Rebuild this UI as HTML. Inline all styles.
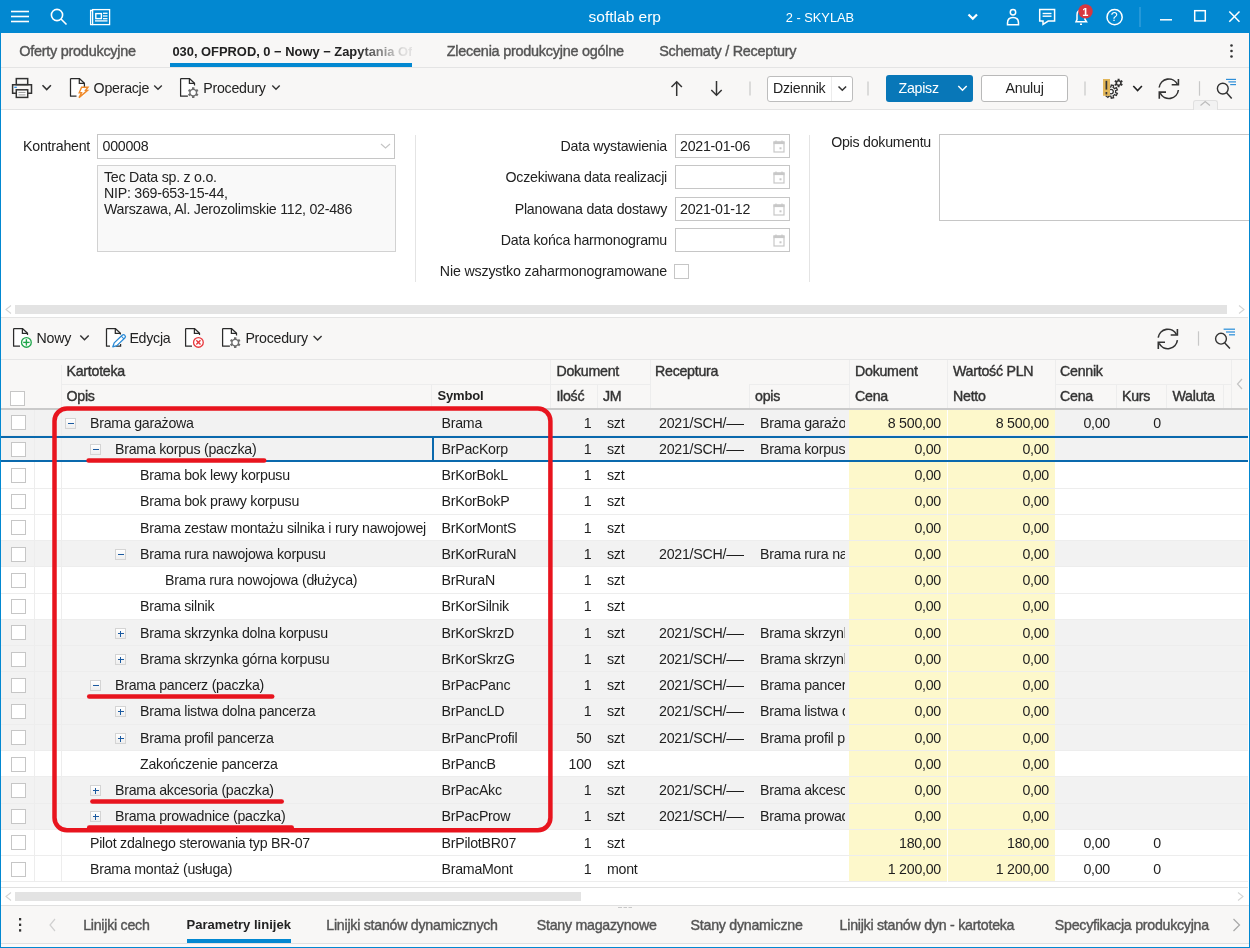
<!DOCTYPE html>
<html><head><meta charset="utf-8">
<style>
*{margin:0;padding:0;box-sizing:border-box}
html,body{width:1250px;height:948px;overflow:hidden;background:#fff;font-family:"Liberation Sans",sans-serif;color:#222;position:relative}
.a{position:absolute}
.t{position:absolute;white-space:nowrap;line-height:16px;letter-spacing:-0.25px}
.m{-webkit-text-stroke:0.4px currentColor}
svg{position:absolute;overflow:visible}
</style></head><body><div style="position:absolute;left:0;top:0;width:1250px;height:948px;overflow:hidden;will-change:transform;background:#fff">

<div class="a" style="left:0px;top:0px;width:1250px;height:33px;background:#0288d1;"></div>
<div class="a" style="left:0;top:33px;width:1px;height:915px;background:#0288d1;z-index:50"></div>
<div class="a" style="left:1249px;top:33px;width:1px;height:915px;background:#0288d1;z-index:50"></div>
<div class="a" style="left:0;top:947px;width:1250px;height:1px;background:#0288d1;z-index:50"></div>
<div class="a" style="left:1px;top:33px;width:1248px;height:34px;background:#f8f7f6;"></div>
<div class="a" style="left:1px;top:67px;width:1248px;height:1px;background:#e4e4e4;"></div>
<div class="a" style="left:1px;top:68px;width:1248px;height:41px;background:#f8f7f6;"></div>
<div class="a" style="left:1px;top:109px;width:1248px;height:1px;background:#e4e4e4;"></div>
<div class="a" style="left:1px;top:317px;width:1247px;height:1px;background:#e4e4e4;"></div>
<div class="a" style="left:1px;top:318px;width:1247px;height:41px;background:#f8f7f6;"></div>
<div class="a" style="left:1px;top:359px;width:1247px;height:1px;background:#e6e6e6;"></div>
<div class="a" style="left:1px;top:360px;width:1247px;height:48px;background:#f8f7f6;"></div>
<div class="a" style="left:1px;top:408px;width:1247px;height:2px;background:#cacaca;"></div>
<div class="a" style="left:1px;top:409.75px;width:1247px;height:26.25px;background:#f2f2f2"></div>
<div class="a" style="left:849px;top:409.75px;width:206px;height:26.25px;background:#fdf8cb"></div>
<div class="a" style="left:1px;top:435.00px;width:1247px;height:1px;background:#ededed"></div>
<div class="a" style="left:11px;top:415.25px;width:15px;height:15px;background:#fff;border:1px solid #c6c6c6"></div>
<div class="a" style="left:65px;top:418px;width:11px;height:11px;border:1px solid #d4d4d4;background:linear-gradient(#fff,#eee)"><div class="a" style="left:1.8px;top:4px;width:6px;height:1px;background:#1b5aa0"></div></div>
<div class="t" style="left:90.00px;top:414.53px;font-size:14.2px;color:#1e1e1e;">Brama garażowa</div>
<div class="t" style="left:441.50px;top:414.53px;font-size:14.2px;color:#1e1e1e;">Brama</div>
<div class="t" style="left:191.50px;width:400px;text-align:right;top:414.53px;font-size:14.2px;color:#1e1e1e;">1</div>
<div class="t" style="left:607.00px;top:414.53px;font-size:14.2px;color:#1e1e1e;">szt</div>
<div class="t" style="left:659.00px;top:414.53px;font-size:14.2px;color:#1e1e1e;width:84.5px;overflow:hidden;">2021/SCH/———</div>
<div class="t" style="left:760.00px;top:414.53px;font-size:14.2px;color:#1e1e1e;width:85px;overflow:hidden;">Brama garażo</div>
<div class="t" style="left:541.00px;width:400px;text-align:right;top:414.53px;font-size:14.2px;color:#1e1e1e;">8 500,00</div>
<div class="t" style="left:649.00px;width:400px;text-align:right;top:414.53px;font-size:14.2px;color:#1e1e1e;">8 500,00</div>
<div class="t" style="left:710.00px;width:400px;text-align:right;top:414.53px;font-size:14.2px;color:#1e1e1e;">0,00</div>
<div class="t" style="left:761.00px;width:400px;text-align:right;top:414.53px;font-size:14.2px;color:#1e1e1e;">0</div>
<div class="a" style="left:1px;top:436.00px;width:1247px;height:26.25px;background:#f2f2f2"></div>
<div class="a" style="left:849px;top:436.00px;width:206px;height:26.25px;background:#fdf8cb"></div>
<div class="a" style="left:1px;top:461.25px;width:1247px;height:1px;background:#ededed"></div>
<div class="a" style="left:11px;top:441.50px;width:15px;height:15px;background:#fff;border:1px solid #c6c6c6"></div>
<div class="a" style="left:90px;top:444px;width:11px;height:11px;border:1px solid #d4d4d4;background:linear-gradient(#fff,#eee)"><div class="a" style="left:1.8px;top:4px;width:6px;height:1px;background:#1b5aa0"></div></div>
<div class="t" style="left:115.00px;top:440.78px;font-size:14.2px;color:#1e1e1e;">Brama korpus (paczka)</div>
<div class="t" style="left:441.50px;top:440.78px;font-size:14.2px;color:#1e1e1e;">BrPacKorp</div>
<div class="t" style="left:191.50px;width:400px;text-align:right;top:440.78px;font-size:14.2px;color:#1e1e1e;">1</div>
<div class="t" style="left:607.00px;top:440.78px;font-size:14.2px;color:#1e1e1e;">szt</div>
<div class="t" style="left:659.00px;top:440.78px;font-size:14.2px;color:#1e1e1e;width:84.5px;overflow:hidden;">2021/SCH/———</div>
<div class="t" style="left:760.00px;top:440.78px;font-size:14.2px;color:#1e1e1e;width:85px;overflow:hidden;">Brama korpus</div>
<div class="t" style="left:541.00px;width:400px;text-align:right;top:440.78px;font-size:14.2px;color:#1e1e1e;">0,00</div>
<div class="t" style="left:649.00px;width:400px;text-align:right;top:440.78px;font-size:14.2px;color:#1e1e1e;">0,00</div>
<div class="a" style="left:1px;top:462.25px;width:1247px;height:26.25px;background:#ffffff"></div>
<div class="a" style="left:849px;top:462.25px;width:206px;height:26.25px;background:#fdf8cb"></div>
<div class="a" style="left:1px;top:487.50px;width:1247px;height:1px;background:#ededed"></div>
<div class="a" style="left:11px;top:467.75px;width:15px;height:15px;background:#fff;border:1px solid #c6c6c6"></div>
<div class="t" style="left:140.00px;top:467.03px;font-size:14.2px;color:#1e1e1e;">Brama bok lewy korpusu</div>
<div class="t" style="left:441.50px;top:467.03px;font-size:14.2px;color:#1e1e1e;">BrKorBokL</div>
<div class="t" style="left:191.50px;width:400px;text-align:right;top:467.03px;font-size:14.2px;color:#1e1e1e;">1</div>
<div class="t" style="left:607.00px;top:467.03px;font-size:14.2px;color:#1e1e1e;">szt</div>
<div class="t" style="left:541.00px;width:400px;text-align:right;top:467.03px;font-size:14.2px;color:#1e1e1e;">0,00</div>
<div class="t" style="left:649.00px;width:400px;text-align:right;top:467.03px;font-size:14.2px;color:#1e1e1e;">0,00</div>
<div class="a" style="left:1px;top:488.50px;width:1247px;height:26.25px;background:#ffffff"></div>
<div class="a" style="left:849px;top:488.50px;width:206px;height:26.25px;background:#fdf8cb"></div>
<div class="a" style="left:1px;top:513.75px;width:1247px;height:1px;background:#ededed"></div>
<div class="a" style="left:11px;top:494.00px;width:15px;height:15px;background:#fff;border:1px solid #c6c6c6"></div>
<div class="t" style="left:140.00px;top:493.28px;font-size:14.2px;color:#1e1e1e;">Brama bok prawy korpusu</div>
<div class="t" style="left:441.50px;top:493.28px;font-size:14.2px;color:#1e1e1e;">BrKorBokP</div>
<div class="t" style="left:191.50px;width:400px;text-align:right;top:493.28px;font-size:14.2px;color:#1e1e1e;">1</div>
<div class="t" style="left:607.00px;top:493.28px;font-size:14.2px;color:#1e1e1e;">szt</div>
<div class="t" style="left:541.00px;width:400px;text-align:right;top:493.28px;font-size:14.2px;color:#1e1e1e;">0,00</div>
<div class="t" style="left:649.00px;width:400px;text-align:right;top:493.28px;font-size:14.2px;color:#1e1e1e;">0,00</div>
<div class="a" style="left:1px;top:514.75px;width:1247px;height:26.25px;background:#ffffff"></div>
<div class="a" style="left:849px;top:514.75px;width:206px;height:26.25px;background:#fdf8cb"></div>
<div class="a" style="left:1px;top:540.00px;width:1247px;height:1px;background:#ededed"></div>
<div class="a" style="left:11px;top:520.25px;width:15px;height:15px;background:#fff;border:1px solid #c6c6c6"></div>
<div class="t" style="left:140.00px;top:519.53px;font-size:14.2px;color:#1e1e1e;">Brama zestaw montażu silnika i rury nawojowej</div>
<div class="t" style="left:441.50px;top:519.53px;font-size:14.2px;color:#1e1e1e;">BrKorMontS</div>
<div class="t" style="left:191.50px;width:400px;text-align:right;top:519.53px;font-size:14.2px;color:#1e1e1e;">1</div>
<div class="t" style="left:607.00px;top:519.53px;font-size:14.2px;color:#1e1e1e;">szt</div>
<div class="t" style="left:541.00px;width:400px;text-align:right;top:519.53px;font-size:14.2px;color:#1e1e1e;">0,00</div>
<div class="t" style="left:649.00px;width:400px;text-align:right;top:519.53px;font-size:14.2px;color:#1e1e1e;">0,00</div>
<div class="a" style="left:1px;top:541.00px;width:1247px;height:26.25px;background:#f2f2f2"></div>
<div class="a" style="left:849px;top:541.00px;width:206px;height:26.25px;background:#fdf8cb"></div>
<div class="a" style="left:1px;top:566.25px;width:1247px;height:1px;background:#ededed"></div>
<div class="a" style="left:11px;top:546.50px;width:15px;height:15px;background:#fff;border:1px solid #c6c6c6"></div>
<div class="a" style="left:115px;top:549px;width:11px;height:11px;border:1px solid #d4d4d4;background:linear-gradient(#fff,#eee)"><div class="a" style="left:1.8px;top:4px;width:6px;height:1px;background:#1b5aa0"></div></div>
<div class="t" style="left:140.00px;top:545.78px;font-size:14.2px;color:#1e1e1e;">Brama rura nawojowa korpusu</div>
<div class="t" style="left:441.50px;top:545.78px;font-size:14.2px;color:#1e1e1e;">BrKorRuraN</div>
<div class="t" style="left:191.50px;width:400px;text-align:right;top:545.78px;font-size:14.2px;color:#1e1e1e;">1</div>
<div class="t" style="left:607.00px;top:545.78px;font-size:14.2px;color:#1e1e1e;">szt</div>
<div class="t" style="left:659.00px;top:545.78px;font-size:14.2px;color:#1e1e1e;width:84.5px;overflow:hidden;">2021/SCH/———</div>
<div class="t" style="left:760.00px;top:545.78px;font-size:14.2px;color:#1e1e1e;width:85px;overflow:hidden;">Brama rura na</div>
<div class="t" style="left:541.00px;width:400px;text-align:right;top:545.78px;font-size:14.2px;color:#1e1e1e;">0,00</div>
<div class="t" style="left:649.00px;width:400px;text-align:right;top:545.78px;font-size:14.2px;color:#1e1e1e;">0,00</div>
<div class="a" style="left:1px;top:567.25px;width:1247px;height:26.25px;background:#ffffff"></div>
<div class="a" style="left:849px;top:567.25px;width:206px;height:26.25px;background:#fdf8cb"></div>
<div class="a" style="left:1px;top:592.50px;width:1247px;height:1px;background:#ededed"></div>
<div class="a" style="left:11px;top:572.75px;width:15px;height:15px;background:#fff;border:1px solid #c6c6c6"></div>
<div class="t" style="left:165.00px;top:572.03px;font-size:14.2px;color:#1e1e1e;">Brama rura nowojowa (dłużyca)</div>
<div class="t" style="left:441.50px;top:572.03px;font-size:14.2px;color:#1e1e1e;">BrRuraN</div>
<div class="t" style="left:191.50px;width:400px;text-align:right;top:572.03px;font-size:14.2px;color:#1e1e1e;">1</div>
<div class="t" style="left:607.00px;top:572.03px;font-size:14.2px;color:#1e1e1e;">szt</div>
<div class="t" style="left:541.00px;width:400px;text-align:right;top:572.03px;font-size:14.2px;color:#1e1e1e;">0,00</div>
<div class="t" style="left:649.00px;width:400px;text-align:right;top:572.03px;font-size:14.2px;color:#1e1e1e;">0,00</div>
<div class="a" style="left:1px;top:593.50px;width:1247px;height:26.25px;background:#ffffff"></div>
<div class="a" style="left:849px;top:593.50px;width:206px;height:26.25px;background:#fdf8cb"></div>
<div class="a" style="left:1px;top:618.75px;width:1247px;height:1px;background:#ededed"></div>
<div class="a" style="left:11px;top:599.00px;width:15px;height:15px;background:#fff;border:1px solid #c6c6c6"></div>
<div class="t" style="left:140.00px;top:598.28px;font-size:14.2px;color:#1e1e1e;">Brama silnik</div>
<div class="t" style="left:441.50px;top:598.28px;font-size:14.2px;color:#1e1e1e;">BrKorSilnik</div>
<div class="t" style="left:191.50px;width:400px;text-align:right;top:598.28px;font-size:14.2px;color:#1e1e1e;">1</div>
<div class="t" style="left:607.00px;top:598.28px;font-size:14.2px;color:#1e1e1e;">szt</div>
<div class="t" style="left:541.00px;width:400px;text-align:right;top:598.28px;font-size:14.2px;color:#1e1e1e;">0,00</div>
<div class="t" style="left:649.00px;width:400px;text-align:right;top:598.28px;font-size:14.2px;color:#1e1e1e;">0,00</div>
<div class="a" style="left:1px;top:619.75px;width:1247px;height:26.25px;background:#f2f2f2"></div>
<div class="a" style="left:849px;top:619.75px;width:206px;height:26.25px;background:#fdf8cb"></div>
<div class="a" style="left:1px;top:645.00px;width:1247px;height:1px;background:#ededed"></div>
<div class="a" style="left:11px;top:625.25px;width:15px;height:15px;background:#fff;border:1px solid #c6c6c6"></div>
<div class="a" style="left:115px;top:628px;width:11px;height:11px;border:1px solid #d4d4d4;background:linear-gradient(#fff,#eee)"><div class="a" style="left:1.8px;top:4px;width:6px;height:1px;background:#1b5aa0"></div><div class="a" style="left:4.3px;top:1.5px;width:1px;height:6px;background:#1b5aa0"></div></div>
<div class="t" style="left:140.00px;top:624.53px;font-size:14.2px;color:#1e1e1e;">Brama skrzynka dolna korpusu</div>
<div class="t" style="left:441.50px;top:624.53px;font-size:14.2px;color:#1e1e1e;">BrKorSkrzD</div>
<div class="t" style="left:191.50px;width:400px;text-align:right;top:624.53px;font-size:14.2px;color:#1e1e1e;">1</div>
<div class="t" style="left:607.00px;top:624.53px;font-size:14.2px;color:#1e1e1e;">szt</div>
<div class="t" style="left:659.00px;top:624.53px;font-size:14.2px;color:#1e1e1e;width:84.5px;overflow:hidden;">2021/SCH/———</div>
<div class="t" style="left:760.00px;top:624.53px;font-size:14.2px;color:#1e1e1e;width:85px;overflow:hidden;">Brama skrzynka</div>
<div class="t" style="left:541.00px;width:400px;text-align:right;top:624.53px;font-size:14.2px;color:#1e1e1e;">0,00</div>
<div class="t" style="left:649.00px;width:400px;text-align:right;top:624.53px;font-size:14.2px;color:#1e1e1e;">0,00</div>
<div class="a" style="left:1px;top:646.00px;width:1247px;height:26.25px;background:#f2f2f2"></div>
<div class="a" style="left:849px;top:646.00px;width:206px;height:26.25px;background:#fdf8cb"></div>
<div class="a" style="left:1px;top:671.25px;width:1247px;height:1px;background:#ededed"></div>
<div class="a" style="left:11px;top:651.50px;width:15px;height:15px;background:#fff;border:1px solid #c6c6c6"></div>
<div class="a" style="left:115px;top:654px;width:11px;height:11px;border:1px solid #d4d4d4;background:linear-gradient(#fff,#eee)"><div class="a" style="left:1.8px;top:4px;width:6px;height:1px;background:#1b5aa0"></div><div class="a" style="left:4.3px;top:1.5px;width:1px;height:6px;background:#1b5aa0"></div></div>
<div class="t" style="left:140.00px;top:650.78px;font-size:14.2px;color:#1e1e1e;">Brama skrzynka górna korpusu</div>
<div class="t" style="left:441.50px;top:650.78px;font-size:14.2px;color:#1e1e1e;">BrKorSkrzG</div>
<div class="t" style="left:191.50px;width:400px;text-align:right;top:650.78px;font-size:14.2px;color:#1e1e1e;">1</div>
<div class="t" style="left:607.00px;top:650.78px;font-size:14.2px;color:#1e1e1e;">szt</div>
<div class="t" style="left:659.00px;top:650.78px;font-size:14.2px;color:#1e1e1e;width:84.5px;overflow:hidden;">2021/SCH/———</div>
<div class="t" style="left:760.00px;top:650.78px;font-size:14.2px;color:#1e1e1e;width:85px;overflow:hidden;">Brama skrzynka</div>
<div class="t" style="left:541.00px;width:400px;text-align:right;top:650.78px;font-size:14.2px;color:#1e1e1e;">0,00</div>
<div class="t" style="left:649.00px;width:400px;text-align:right;top:650.78px;font-size:14.2px;color:#1e1e1e;">0,00</div>
<div class="a" style="left:1px;top:672.25px;width:1247px;height:26.25px;background:#f2f2f2"></div>
<div class="a" style="left:849px;top:672.25px;width:206px;height:26.25px;background:#fdf8cb"></div>
<div class="a" style="left:1px;top:697.50px;width:1247px;height:1px;background:#ededed"></div>
<div class="a" style="left:11px;top:677.75px;width:15px;height:15px;background:#fff;border:1px solid #c6c6c6"></div>
<div class="a" style="left:90px;top:680px;width:11px;height:11px;border:1px solid #d4d4d4;background:linear-gradient(#fff,#eee)"><div class="a" style="left:1.8px;top:4px;width:6px;height:1px;background:#1b5aa0"></div></div>
<div class="t" style="left:115.00px;top:677.03px;font-size:14.2px;color:#1e1e1e;">Brama pancerz (paczka)</div>
<div class="t" style="left:441.50px;top:677.03px;font-size:14.2px;color:#1e1e1e;">BrPacPanc</div>
<div class="t" style="left:191.50px;width:400px;text-align:right;top:677.03px;font-size:14.2px;color:#1e1e1e;">1</div>
<div class="t" style="left:607.00px;top:677.03px;font-size:14.2px;color:#1e1e1e;">szt</div>
<div class="t" style="left:659.00px;top:677.03px;font-size:14.2px;color:#1e1e1e;width:84.5px;overflow:hidden;">2021/SCH/———</div>
<div class="t" style="left:760.00px;top:677.03px;font-size:14.2px;color:#1e1e1e;width:85px;overflow:hidden;">Brama pancerz</div>
<div class="t" style="left:541.00px;width:400px;text-align:right;top:677.03px;font-size:14.2px;color:#1e1e1e;">0,00</div>
<div class="t" style="left:649.00px;width:400px;text-align:right;top:677.03px;font-size:14.2px;color:#1e1e1e;">0,00</div>
<div class="a" style="left:1px;top:698.50px;width:1247px;height:26.25px;background:#f2f2f2"></div>
<div class="a" style="left:849px;top:698.50px;width:206px;height:26.25px;background:#fdf8cb"></div>
<div class="a" style="left:1px;top:723.75px;width:1247px;height:1px;background:#ededed"></div>
<div class="a" style="left:11px;top:704.00px;width:15px;height:15px;background:#fff;border:1px solid #c6c6c6"></div>
<div class="a" style="left:115px;top:706px;width:11px;height:11px;border:1px solid #d4d4d4;background:linear-gradient(#fff,#eee)"><div class="a" style="left:1.8px;top:4px;width:6px;height:1px;background:#1b5aa0"></div><div class="a" style="left:4.3px;top:1.5px;width:1px;height:6px;background:#1b5aa0"></div></div>
<div class="t" style="left:140.00px;top:703.28px;font-size:14.2px;color:#1e1e1e;">Brama listwa dolna pancerza</div>
<div class="t" style="left:441.50px;top:703.28px;font-size:14.2px;color:#1e1e1e;">BrPancLD</div>
<div class="t" style="left:191.50px;width:400px;text-align:right;top:703.28px;font-size:14.2px;color:#1e1e1e;">1</div>
<div class="t" style="left:607.00px;top:703.28px;font-size:14.2px;color:#1e1e1e;">szt</div>
<div class="t" style="left:659.00px;top:703.28px;font-size:14.2px;color:#1e1e1e;width:84.5px;overflow:hidden;">2021/SCH/———</div>
<div class="t" style="left:760.00px;top:703.28px;font-size:14.2px;color:#1e1e1e;width:85px;overflow:hidden;">Brama listwa d</div>
<div class="t" style="left:541.00px;width:400px;text-align:right;top:703.28px;font-size:14.2px;color:#1e1e1e;">0,00</div>
<div class="t" style="left:649.00px;width:400px;text-align:right;top:703.28px;font-size:14.2px;color:#1e1e1e;">0,00</div>
<div class="a" style="left:1px;top:724.75px;width:1247px;height:26.25px;background:#f2f2f2"></div>
<div class="a" style="left:849px;top:724.75px;width:206px;height:26.25px;background:#fdf8cb"></div>
<div class="a" style="left:1px;top:750.00px;width:1247px;height:1px;background:#ededed"></div>
<div class="a" style="left:11px;top:730.25px;width:15px;height:15px;background:#fff;border:1px solid #c6c6c6"></div>
<div class="a" style="left:115px;top:733px;width:11px;height:11px;border:1px solid #d4d4d4;background:linear-gradient(#fff,#eee)"><div class="a" style="left:1.8px;top:4px;width:6px;height:1px;background:#1b5aa0"></div><div class="a" style="left:4.3px;top:1.5px;width:1px;height:6px;background:#1b5aa0"></div></div>
<div class="t" style="left:140.00px;top:729.53px;font-size:14.2px;color:#1e1e1e;">Brama profil pancerza</div>
<div class="t" style="left:441.50px;top:729.53px;font-size:14.2px;color:#1e1e1e;">BrPancProfil</div>
<div class="t" style="left:191.50px;width:400px;text-align:right;top:729.53px;font-size:14.2px;color:#1e1e1e;">50</div>
<div class="t" style="left:607.00px;top:729.53px;font-size:14.2px;color:#1e1e1e;">szt</div>
<div class="t" style="left:659.00px;top:729.53px;font-size:14.2px;color:#1e1e1e;width:84.5px;overflow:hidden;">2021/SCH/———</div>
<div class="t" style="left:760.00px;top:729.53px;font-size:14.2px;color:#1e1e1e;width:85px;overflow:hidden;">Brama profil p</div>
<div class="t" style="left:541.00px;width:400px;text-align:right;top:729.53px;font-size:14.2px;color:#1e1e1e;">0,00</div>
<div class="t" style="left:649.00px;width:400px;text-align:right;top:729.53px;font-size:14.2px;color:#1e1e1e;">0,00</div>
<div class="a" style="left:1px;top:751.00px;width:1247px;height:26.25px;background:#ffffff"></div>
<div class="a" style="left:849px;top:751.00px;width:206px;height:26.25px;background:#fdf8cb"></div>
<div class="a" style="left:1px;top:776.25px;width:1247px;height:1px;background:#ededed"></div>
<div class="a" style="left:11px;top:756.50px;width:15px;height:15px;background:#fff;border:1px solid #c6c6c6"></div>
<div class="t" style="left:140.00px;top:755.78px;font-size:14.2px;color:#1e1e1e;">Zakończenie pancerza</div>
<div class="t" style="left:441.50px;top:755.78px;font-size:14.2px;color:#1e1e1e;">BrPancB</div>
<div class="t" style="left:191.50px;width:400px;text-align:right;top:755.78px;font-size:14.2px;color:#1e1e1e;">100</div>
<div class="t" style="left:607.00px;top:755.78px;font-size:14.2px;color:#1e1e1e;">szt</div>
<div class="t" style="left:541.00px;width:400px;text-align:right;top:755.78px;font-size:14.2px;color:#1e1e1e;">0,00</div>
<div class="t" style="left:649.00px;width:400px;text-align:right;top:755.78px;font-size:14.2px;color:#1e1e1e;">0,00</div>
<div class="a" style="left:1px;top:777.25px;width:1247px;height:26.25px;background:#f2f2f2"></div>
<div class="a" style="left:849px;top:777.25px;width:206px;height:26.25px;background:#fdf8cb"></div>
<div class="a" style="left:1px;top:802.50px;width:1247px;height:1px;background:#ededed"></div>
<div class="a" style="left:11px;top:782.75px;width:15px;height:15px;background:#fff;border:1px solid #c6c6c6"></div>
<div class="a" style="left:90px;top:785px;width:11px;height:11px;border:1px solid #d4d4d4;background:linear-gradient(#fff,#eee)"><div class="a" style="left:1.8px;top:4px;width:6px;height:1px;background:#1b5aa0"></div><div class="a" style="left:4.3px;top:1.5px;width:1px;height:6px;background:#1b5aa0"></div></div>
<div class="t" style="left:115.00px;top:782.03px;font-size:14.2px;color:#1e1e1e;">Brama akcesoria (paczka)</div>
<div class="t" style="left:441.50px;top:782.03px;font-size:14.2px;color:#1e1e1e;">BrPacAkc</div>
<div class="t" style="left:191.50px;width:400px;text-align:right;top:782.03px;font-size:14.2px;color:#1e1e1e;">1</div>
<div class="t" style="left:607.00px;top:782.03px;font-size:14.2px;color:#1e1e1e;">szt</div>
<div class="t" style="left:659.00px;top:782.03px;font-size:14.2px;color:#1e1e1e;width:84.5px;overflow:hidden;">2021/SCH/———</div>
<div class="t" style="left:760.00px;top:782.03px;font-size:14.2px;color:#1e1e1e;width:85px;overflow:hidden;">Brama akcesoria</div>
<div class="t" style="left:541.00px;width:400px;text-align:right;top:782.03px;font-size:14.2px;color:#1e1e1e;">0,00</div>
<div class="t" style="left:649.00px;width:400px;text-align:right;top:782.03px;font-size:14.2px;color:#1e1e1e;">0,00</div>
<div class="a" style="left:1px;top:803.50px;width:1247px;height:26.25px;background:#f2f2f2"></div>
<div class="a" style="left:849px;top:803.50px;width:206px;height:26.25px;background:#fdf8cb"></div>
<div class="a" style="left:1px;top:828.75px;width:1247px;height:1px;background:#ededed"></div>
<div class="a" style="left:11px;top:809.00px;width:15px;height:15px;background:#fff;border:1px solid #c6c6c6"></div>
<div class="a" style="left:90px;top:811px;width:11px;height:11px;border:1px solid #d4d4d4;background:linear-gradient(#fff,#eee)"><div class="a" style="left:1.8px;top:4px;width:6px;height:1px;background:#1b5aa0"></div><div class="a" style="left:4.3px;top:1.5px;width:1px;height:6px;background:#1b5aa0"></div></div>
<div class="t" style="left:115.00px;top:808.28px;font-size:14.2px;color:#1e1e1e;">Brama prowadnice (paczka)</div>
<div class="t" style="left:441.50px;top:808.28px;font-size:14.2px;color:#1e1e1e;">BrPacProw</div>
<div class="t" style="left:191.50px;width:400px;text-align:right;top:808.28px;font-size:14.2px;color:#1e1e1e;">1</div>
<div class="t" style="left:607.00px;top:808.28px;font-size:14.2px;color:#1e1e1e;">szt</div>
<div class="t" style="left:659.00px;top:808.28px;font-size:14.2px;color:#1e1e1e;width:84.5px;overflow:hidden;">2021/SCH/———</div>
<div class="t" style="left:760.00px;top:808.28px;font-size:14.2px;color:#1e1e1e;width:85px;overflow:hidden;">Brama prowadnice</div>
<div class="t" style="left:541.00px;width:400px;text-align:right;top:808.28px;font-size:14.2px;color:#1e1e1e;">0,00</div>
<div class="t" style="left:649.00px;width:400px;text-align:right;top:808.28px;font-size:14.2px;color:#1e1e1e;">0,00</div>
<div class="a" style="left:1px;top:829.75px;width:1247px;height:26.25px;background:#ffffff"></div>
<div class="a" style="left:849px;top:829.75px;width:206px;height:26.25px;background:#fdf8cb"></div>
<div class="a" style="left:1px;top:855.00px;width:1247px;height:1px;background:#ededed"></div>
<div class="a" style="left:11px;top:835.25px;width:15px;height:15px;background:#fff;border:1px solid #c6c6c6"></div>
<div class="t" style="left:90.00px;top:834.53px;font-size:14.2px;color:#1e1e1e;">Pilot zdalnego sterowania typ BR-07</div>
<div class="t" style="left:441.50px;top:834.53px;font-size:14.2px;color:#1e1e1e;">BrPilotBR07</div>
<div class="t" style="left:191.50px;width:400px;text-align:right;top:834.53px;font-size:14.2px;color:#1e1e1e;">1</div>
<div class="t" style="left:607.00px;top:834.53px;font-size:14.2px;color:#1e1e1e;">szt</div>
<div class="t" style="left:541.00px;width:400px;text-align:right;top:834.53px;font-size:14.2px;color:#1e1e1e;">180,00</div>
<div class="t" style="left:649.00px;width:400px;text-align:right;top:834.53px;font-size:14.2px;color:#1e1e1e;">180,00</div>
<div class="t" style="left:710.00px;width:400px;text-align:right;top:834.53px;font-size:14.2px;color:#1e1e1e;">0,00</div>
<div class="t" style="left:761.00px;width:400px;text-align:right;top:834.53px;font-size:14.2px;color:#1e1e1e;">0</div>
<div class="a" style="left:1px;top:856.00px;width:1247px;height:26.25px;background:#ffffff"></div>
<div class="a" style="left:849px;top:856.00px;width:206px;height:26.25px;background:#fdf8cb"></div>
<div class="a" style="left:1px;top:881.25px;width:1247px;height:1px;background:#ededed"></div>
<div class="a" style="left:11px;top:861.50px;width:15px;height:15px;background:#fff;border:1px solid #c6c6c6"></div>
<div class="t" style="left:90.00px;top:860.78px;font-size:14.2px;color:#1e1e1e;">Brama montaż (usługa)</div>
<div class="t" style="left:441.50px;top:860.78px;font-size:14.2px;color:#1e1e1e;">BramaMont</div>
<div class="t" style="left:191.50px;width:400px;text-align:right;top:860.78px;font-size:14.2px;color:#1e1e1e;">1</div>
<div class="t" style="left:607.00px;top:860.78px;font-size:14.2px;color:#1e1e1e;">mont</div>
<div class="t" style="left:541.00px;width:400px;text-align:right;top:860.78px;font-size:14.2px;color:#1e1e1e;">1 200,00</div>
<div class="t" style="left:649.00px;width:400px;text-align:right;top:860.78px;font-size:14.2px;color:#1e1e1e;">1 200,00</div>
<div class="t" style="left:710.00px;width:400px;text-align:right;top:860.78px;font-size:14.2px;color:#1e1e1e;">0,00</div>
<div class="t" style="left:761.00px;width:400px;text-align:right;top:860.78px;font-size:14.2px;color:#1e1e1e;">0</div>
<div class="a" style="left:34px;top:409.75px;width:1px;height:472.5px;background:#ededed"></div>
<div class="a" style="left:61px;top:409.75px;width:1px;height:472.5px;background:#ededed"></div>
<div class="a" style="left:947px;top:409.75px;width:1px;height:472.5px;background:#ffffff"></div>
<div class="a" style="left:1px;top:887px;width:1247px;height:1px;background:#e0e0e0;"></div>
<div class="a" style="left:1px;top:888px;width:1247px;height:17px;background:#ffffff;"></div>
<div class="a" style="left:15px;top:892px;width:566px;height:9px;background:#e3e3e3;"></div>
<div class="a" style="left:1px;top:905px;width:1248px;height:1px;background:#e0e0e0;"></div>
<div class="a" style="left:1px;top:906px;width:1248px;height:37px;background:#f8f7f6;"></div>
<div class="a" style="left:1px;top:943px;width:1248px;height:1px;background:#e0e0e0;"></div>
<div class="a" style="left:1px;top:944px;width:1248px;height:3px;background:#fafafa;"></div>
<svg style="left:0;top:0" width="1250" height="33">
<g stroke="#fff" stroke-width="1.6" fill="none">
<line x1="11" y1="11.5" x2="29" y2="11.5"/><line x1="11" y1="16.5" x2="29" y2="16.5"/><line x1="11" y1="21.5" x2="29" y2="21.5"/>
<circle cx="57" cy="15" r="5.6"/><line x1="61" y1="19" x2="66.5" y2="24.5"/>
<rect x="92.6" y="9.6" width="17" height="15" stroke-width="1.3"/><path d="M92.6,10.5 H90.6 V24.6 H92.6" stroke-width="1.3"/>
<rect x="95.8" y="13.6" width="5.6" height="5" stroke-width="1.4"/>
<line x1="103" y1="13.3" x2="107.5" y2="13.3" stroke-width="1.3"/><line x1="103" y1="16" x2="107.5" y2="16" stroke-width="1.3"/><line x1="103" y1="18.7" x2="107.5" y2="18.7" stroke-width="1.3"/><line x1="95" y1="20.9" x2="107.5" y2="20.9" stroke-width="1.3"/>
<polyline points="968.5,14.5 972.8,18.8 977,14.5" stroke-width="2.2"/>
<circle cx="1013" cy="12.3" r="2.7" stroke-width="1.5"/>
<path d="M1007.5,24.8 L1018.5,24.8 L1018.5,23 C1018.5,19.6 1016.2,17.5 1013,17.5 C1009.8,17.5 1007.5,19.6 1007.5,23 Z" stroke-width="1.5"/>
<path d="M1039.7,9.6 H1054.6 V21 H1048.2 L1043,24.3 V21 H1039.7 Z" stroke-width="1.5"/>
<line x1="1042.6" y1="13.5" x2="1051.5" y2="13.5" stroke-width="1.4"/><line x1="1042.6" y1="16.2" x2="1051.5" y2="16.2" stroke-width="1.4"/>
<path d="M1076,21.7 H1086.5 L1085,19.5 V15 C1085,12 1083.3,10.2 1081,10.2 C1078.7,10.2 1077,12 1077,15 V19.5 Z" stroke-width="1.5"/>
<line x1="1080" y1="24.3" x2="1082" y2="24.3" stroke-width="1.5"/>
<circle cx="1114.6" cy="17.2" r="7.6" stroke-width="1.5"/>
<line x1="1160" y1="19.8" x2="1172" y2="19.8" stroke-width="1.5"/>
<rect x="1194.7" y="10.7" width="10.6" height="10.2" stroke-width="1.5"/>
<line x1="1229.3" y1="11.5" x2="1239.5" y2="21.7" stroke-width="1.5"/><line x1="1239.5" y1="11.5" x2="1229.3" y2="21.7" stroke-width="1.5"/>
</g>
<line x1="1140" y1="7" x2="1140" y2="27" stroke="#3ea3dd" stroke-width="1.2"/>
<circle cx="1085.5" cy="11.4" r="7.2" fill="#d7373f"/>
</svg>
<div class="t" style="left:1082.20px;top:3.89px;font-size:11px;color:#fff;font-weight:bold;letter-spacing:0">1</div>
<div class="t" style="left:1110.80px;top:9.17px;font-size:12.5px;color:#fff;">?</div>
<div class="t" style="left:588.60px;top:9.13px;font-size:15.5px;color:#fff;letter-spacing:0">softlab erp</div>
<div class="t" style="left:785.80px;top:9.56px;font-size:12.8px;color:#fff;letter-spacing:0">2 - SKYLAB</div>
<div class="t m" style="left:19.20px;top:43.29px;font-size:14.45px;color:#555;">Oferty produkcyjne</div>
<div class="t" style="left:172.4px;top:44px;font-size:12.9px;font-weight:bold;letter-spacing:0;color:#222;width:240px;overflow:hidden;-webkit-mask-image:linear-gradient(90deg,#000 185px,rgba(0,0,0,0.1) 232px)">030, OFPROD, 0 − Nowy − Zapytania Oferty</div>
<div class="a" style="left:170px;top:63px;width:242px;height:3.5px;background:#0288d1;"></div>
<div class="t m" style="left:446.80px;top:43.29px;font-size:14.45px;color:#555;">Zlecenia produkcyjne ogólne</div>
<div class="t m" style="left:659.20px;top:43.29px;font-size:14.45px;color:#555;">Schematy / Receptury</div>
<svg style="left:0;top:0" width="1250" height="70"><g fill="#333"><circle cx="1231.5" cy="45.5" r="1.3"/><circle cx="1231.5" cy="51" r="1.3"/><circle cx="1231.5" cy="56.5" r="1.3"/></g></svg>
<svg style="left:0;top:0" width="1250" height="110">
<g fill="none" stroke="#333" stroke-width="1.5">
<rect x="16.3" y="78.6" width="11.4" height="6"/>
<path d="M16.3,93.3 H12.6 V84.8 H31.5 V93.3 H27.7"/>
<rect x="16.3" y="89.8" width="11.4" height="7.6" fill="#fff"/>
</g>
<line x1="18.5" y1="92.4" x2="25.5" y2="92.4" stroke="#999" stroke-width="1"/><line x1="18.5" y1="94.9" x2="25.5" y2="94.9" stroke="#999" stroke-width="1"/>
<line x1="14.3" y1="87.3" x2="16.8" y2="87.3" stroke="#1e88e5" stroke-width="1.2"/>
<polyline points="42.5,85.3 46.7,89.5 50.9,85.3" fill="none" stroke="#333" stroke-width="1.6"/>
<path d="M70.5,78.5 H79.3 L84.4,83.3 V96.2 H70.5 Z" fill="#fff" stroke="none"/><path d="M70.5,78.5 H79.3 L84.4,83.3 V88.0 M76.5,96.2 H70.5 V78.5" fill="none" stroke="#2b2b2b" stroke-width="1.25" stroke-linejoin="round"/><path d="M79.3,78.5 V83.3 H84.4" fill="none" stroke="#2b2b2b" stroke-width="1.25"/>
<path d="M81.6,87.3 H88 L85.6,90.4 H87.5 L79,97.6 L81.5,92.8 H79.2 Z" fill="none" stroke="#ef8a2a" stroke-width="1.4" stroke-linejoin="miter"/>
<polyline points="154.2,85.5 158,89.2 161.8,85.5" fill="none" stroke="#333" stroke-width="1.4"/>
<path d="M180.6,78.5 H189.4 L194.5,83.3 V96.2 H180.6 Z" fill="#fff" stroke="none"/><path d="M180.6,78.5 H189.4 L194.5,83.3 V85.5 M187.9,96.2 H180.6 V78.5" fill="none" stroke="#2b2b2b" stroke-width="1.25" stroke-linejoin="round"/><path d="M189.4,78.5 V83.3 H194.5" fill="none" stroke="#2b2b2b" stroke-width="1.25"/><path d="M197.20,92.60 L197.10,93.47 L198.45,94.24 L197.25,96.32 L195.91,95.54 L195.20,96.06 L194.40,96.42 L194.40,97.97 L192.00,97.97 L192.00,96.42 L191.20,96.06 L190.49,95.54 L189.15,96.32 L187.95,94.24 L189.30,93.47 L189.20,92.60 L189.30,91.73 L187.95,90.96 L189.15,88.88 L190.49,89.66 L191.20,89.14 L192.00,88.78 L192.00,87.23 L194.40,87.23 L194.40,88.78 L195.20,89.14 L195.91,89.66 L197.25,88.88 L198.45,90.96 L197.10,91.73 Z" fill="#6e6e6e"/><circle cx="193.2" cy="92.6" r="2.6" fill="#fff"/>
<polyline points="272.3,85.5 276,89.2 279.7,85.5" fill="none" stroke="#333" stroke-width="1.4"/>
<g stroke="#333" stroke-width="1.5" fill="none">
<line x1="676.7" y1="82" x2="676.7" y2="96"/><polyline points="671.5,87 676.7,81.8 681.9,87"/>
<line x1="716.5" y1="81" x2="716.5" y2="95"/><polyline points="711.3,90 716.5,95.2 721.7,90"/>
</g>
<line x1="750" y1="81.5" x2="750" y2="95.5" stroke="#c8c8c8" stroke-width="1.2"/>
<line x1="868" y1="81.5" x2="868" y2="95.5" stroke="#c8c8c8" stroke-width="1.2"/>
<line x1="1085" y1="81.5" x2="1085" y2="95.5" stroke="#c8c8c8" stroke-width="1.2"/>
<line x1="1199.5" y1="81.2" x2="1199.5" y2="95.7" stroke="#c8c8c8" stroke-width="1.2"/>
</svg>
<div class="t" style="left:93.60px;top:79.88px;font-size:14.2px;color:#222;">Operacje</div>
<div class="t" style="left:203.30px;top:79.88px;font-size:14.2px;color:#222;">Procedury</div>
<div class="a" style="left:766.5px;top:75.5px;width:86px;height:26px;border:1px solid #bdbdbd;border-radius:3px;background:#fff"></div>
<div class="a" style="left:831px;top:76.5px;width:1px;height:24px;background:#ececec;"></div>
<div class="t" style="left:773.00px;top:79.88px;font-size:14.2px;color:#222;">Dziennik</div>
<svg style="left:0;top:0" width="1250" height="110"><polyline points="838.5,86.5 842.3,90.3 846.1,86.5" fill="none" stroke="#333" stroke-width="1.5"/></svg>
<div class="a" style="left:886px;top:75.2px;width:87px;height:26.5px;background:#0877b8;border-radius:3px"></div>
<div class="t" style="left:898.50px;top:79.88px;font-size:14.2px;color:#fff;">Zapisz</div>
<svg style="left:0;top:0" width="1250" height="110"><polyline points="958.3,86 962.5,90.2 966.7,86" fill="none" stroke="#fff" stroke-width="1.5"/></svg>
<div class="a" style="left:981px;top:75.2px;width:87px;height:26.5px;border:1px solid #b9b9b9;border-radius:3px;background:#fff"></div>
<div class="t" style="left:1005.60px;top:79.88px;font-size:14.2px;color:#222;">Anuluj</div>
<svg style="left:0;top:0" width="1250" height="110">
<path d="M1115.60,91.60 L1115.51,92.50 L1117.36,93.36 L1116.34,95.48 L1114.52,94.56 L1113.87,95.20 L1113.11,95.69 L1113.59,97.67 L1111.30,98.19 L1110.88,96.20 L1109.98,96.08 L1109.12,95.80 L1107.87,97.41 L1106.03,95.94 L1107.33,94.37 L1106.86,93.60 L1106.54,92.74 L1104.51,92.78 L1104.51,90.42 L1106.54,90.46 L1106.86,89.60 L1107.33,88.83 L1106.03,87.26 L1107.87,85.79 L1109.12,87.40 L1109.98,87.12 L1110.88,87.00 L1111.30,85.01 L1113.59,85.53 L1113.11,87.51 L1113.87,88.00 L1114.52,88.64 L1116.34,87.72 L1117.36,89.84 L1115.51,90.70 Z" fill="#fff" stroke="#333" stroke-width="1.3"/><circle cx="1111" cy="91.6" r="2.3" fill="none" stroke="#333" stroke-width="1.3"/>
<rect x="1103" y="79" width="7" height="16.8" fill="#e2b659"/>
<line x1="1106.4" y1="80.8" x2="1106.4" y2="89.6" stroke="#333" stroke-width="1.7"/><line x1="1106.4" y1="92" x2="1106.4" y2="94.4" stroke="#333" stroke-width="1.7"/>
<path d="M1121.60,83.00 L1121.54,83.61 L1122.82,84.25 L1121.79,86.03 L1120.60,85.24 L1120.10,85.60 L1119.54,85.85 L1119.63,87.28 L1117.57,87.28 L1117.66,85.85 L1117.10,85.60 L1116.60,85.24 L1115.41,86.03 L1114.38,84.25 L1115.66,83.61 L1115.60,83.00 L1115.66,82.39 L1114.38,81.75 L1115.41,79.97 L1116.60,80.76 L1117.10,80.40 L1117.66,80.15 L1117.57,78.72 L1119.63,78.72 L1119.54,80.15 L1120.10,80.40 L1120.60,80.76 L1121.79,79.97 L1122.82,81.75 L1121.54,82.39 Z" fill="#333"/><circle cx="1118.6" cy="83" r="1.5" fill="#f8f7f6"/>
<polyline points="1133.3,86 1137.6,90.5 1141.9,86" fill="none" stroke="#222" stroke-width="1.6"/>
<g fill="none" stroke="#333" stroke-width="1.6">
<path d="M1159.2,87.5 A9.66,9.66 0 0 1 1177.5,84.5"/><polyline points="1178.4,78.9 1178.4,84.8 1171.7,84.8"/>
<path d="M1178.4,90 A9.66,9.66 0 0 1 1160.2,93.2"/><polyline points="1166,92.1 1159.3,92.1 1159.3,98.7"/>
</g>
<circle cx="1222.8" cy="88.6" r="5.4" fill="none" stroke="#333" stroke-width="1.4"/><line x1="1226.4" y1="92.6" x2="1231.7" y2="98.4" stroke="#333" stroke-width="1.5"/>
<g stroke="#2f8fd8" stroke-width="1.2"><line x1="1226" y1="79.4" x2="1236" y2="79.4"/><line x1="1228.4" y1="81.9" x2="1236" y2="81.9"/><line x1="1230.2" y1="84.6" x2="1236" y2="84.6"/></g>
</svg>
<div class="a" style="left:1193px;top:99.5px;width:24.5px;height:10px;border:1px solid #e0e0e0;border-bottom:none;border-radius:3px 3px 0 0;background:#f2f2f2"></div>
<svg style="left:0;top:0" width="1250" height="110"><polyline points="1200.5,105.5 1205.2,101.5 1209.9,105.5" fill="none" stroke="#bbb" stroke-width="1.2"/></svg>
<div class="t" style="left:23.10px;top:137.68px;font-size:14.2px;color:#222;">Kontrahent</div>
<div class="a" style="left:97px;top:134px;width:298px;height:25px;border:1px solid #c6c6c6;background:#fff"></div>
<div class="t" style="left:102.50px;top:137.78px;font-size:14.2px;color:#222;">000008</div>
<svg style="left:0;top:0" width="1250" height="300"><polyline points="381,144 385.5,148 390,144" fill="none" stroke="#c4c4c4" stroke-width="1.1"/></svg>
<div class="a" style="left:97px;top:165px;width:299px;height:87px;border:1px solid #d2d2d2;background:#f9f9f9"></div>
<div class="t" style="left:104.00px;top:168.58px;font-size:14.2px;color:#222;">Tec Data sp. z o.o.</div>
<div class="t" style="left:104.00px;top:184.88px;font-size:14.2px;color:#222;">NIP: 369-653-15-44,</div>
<div class="t" style="left:104.00px;top:201.18px;font-size:14.2px;color:#222;">Warszawa, Al. Jerozolimskie 112, 02-486</div>
<div class="a" style="left:415px;top:135px;width:1px;height:147px;background:#e4e4e4;"></div>
<div class="a" style="left:809px;top:135px;width:1px;height:147px;background:#e4e4e4;"></div>
<div class="t" style="left:267.00px;width:400px;text-align:right;top:137.78px;font-size:14.2px;color:#222;">Data wystawienia</div>
<div class="a" style="left:675px;top:134px;width:115px;height:24px;border:1px solid #c6c6c6;background:#fff"></div>
<div class="t" style="left:680.00px;top:137.78px;font-size:14.2px;color:#222;">2021-01-06</div>
<div class="t" style="left:267.00px;width:400px;text-align:right;top:168.78px;font-size:14.2px;color:#222;">Oczekiwana data realizacji</div>
<div class="a" style="left:675px;top:165px;width:115px;height:24px;border:1px solid #c6c6c6;background:#fff"></div>
<div class="t" style="left:267.00px;width:400px;text-align:right;top:200.78px;font-size:14.2px;color:#222;">Planowana data dostawy</div>
<div class="a" style="left:675px;top:197px;width:115px;height:24px;border:1px solid #c6c6c6;background:#fff"></div>
<div class="t" style="left:680.00px;top:200.78px;font-size:14.2px;color:#222;">2021-01-12</div>
<div class="t" style="left:267.00px;width:400px;text-align:right;top:231.78px;font-size:14.2px;color:#222;">Data końca harmonogramu</div>
<div class="a" style="left:675px;top:228px;width:115px;height:24px;border:1px solid #c6c6c6;background:#fff"></div>
<svg style="left:0;top:0" width="1250" height="300"><g transform="translate(773.5,140.5)"><rect x="0.5" y="1.5" width="10" height="10" fill="none" stroke="#c8c8c8" stroke-width="1.2"/><rect x="0" y="1" width="11" height="2.6" fill="#c8c8c8"/><line x1="2.5" y1="0" x2="2.5" y2="2" stroke="#c8c8c8" stroke-width="1.2"/><line x1="8.5" y1="0" x2="8.5" y2="2" stroke="#c8c8c8" stroke-width="1.2"/><rect x="6" y="6.8" width="2" height="2" fill="#c8c8c8"/></g><g transform="translate(773.5,171.5)"><rect x="0.5" y="1.5" width="10" height="10" fill="none" stroke="#c8c8c8" stroke-width="1.2"/><rect x="0" y="1" width="11" height="2.6" fill="#c8c8c8"/><line x1="2.5" y1="0" x2="2.5" y2="2" stroke="#c8c8c8" stroke-width="1.2"/><line x1="8.5" y1="0" x2="8.5" y2="2" stroke="#c8c8c8" stroke-width="1.2"/><rect x="6" y="6.8" width="2" height="2" fill="#c8c8c8"/></g><g transform="translate(773.5,203.5)"><rect x="0.5" y="1.5" width="10" height="10" fill="none" stroke="#c8c8c8" stroke-width="1.2"/><rect x="0" y="1" width="11" height="2.6" fill="#c8c8c8"/><line x1="2.5" y1="0" x2="2.5" y2="2" stroke="#c8c8c8" stroke-width="1.2"/><line x1="8.5" y1="0" x2="8.5" y2="2" stroke="#c8c8c8" stroke-width="1.2"/><rect x="6" y="6.8" width="2" height="2" fill="#c8c8c8"/></g><g transform="translate(773.5,234.5)"><rect x="0.5" y="1.5" width="10" height="10" fill="none" stroke="#c8c8c8" stroke-width="1.2"/><rect x="0" y="1" width="11" height="2.6" fill="#c8c8c8"/><line x1="2.5" y1="0" x2="2.5" y2="2" stroke="#c8c8c8" stroke-width="1.2"/><line x1="8.5" y1="0" x2="8.5" y2="2" stroke="#c8c8c8" stroke-width="1.2"/><rect x="6" y="6.8" width="2" height="2" fill="#c8c8c8"/></g></svg>
<div class="t" style="left:267.00px;width:400px;text-align:right;top:263.28px;font-size:14.2px;color:#222;letter-spacing:-0.15px">Nie wszystko zaharmonogramowane</div>
<div class="a" style="left:674px;top:264px;width:15px;height:15px;border:1px solid #c6c6c6;background:#fff"></div>
<div class="t" style="left:831.20px;top:133.68px;font-size:14.2px;color:#222;">Opis dokumentu</div>
<div class="a" style="left:939px;top:134px;width:320px;height:87px;border:1px solid #c6c6c6;background:#fff"></div>
<div class="a" style="left:15px;top:305px;width:1212px;height:9px;background:#e3e3e3;"></div>
<svg style="left:0;top:0" width="1250" height="320"><polyline points="11,305.5 6,309.5 11,313.5" fill="none" stroke="#d4d4d4" stroke-width="1.1"/><polyline points="1239,305.5 1244,309.5 1239,313.5" fill="none" stroke="#d4d4d4" stroke-width="1.1"/></svg>
<svg style="left:0;top:0" width="1250" height="360">
<path d="M13.6,328.5 H22.4 L27.5,333.3 V346.2 H13.6 Z" fill="#fff" stroke="none"/><path d="M13.6,328.5 H22.4 L27.5,333.3 V335.0 M20.0,346.2 H13.6 V328.5" fill="none" stroke="#2b2b2b" stroke-width="1.25" stroke-linejoin="round"/><path d="M22.4,328.5 V333.3 H27.5" fill="none" stroke="#2b2b2b" stroke-width="1.25"/><path d="M106.5,328.5 H115.3 L120.4,333.3 V346.2 H106.5 Z" fill="#fff" stroke="none"/><path d="M106.5,328.5 H115.3 L120.4,333.3 V334.5 M110.0,346.2 H106.5 V328.5" fill="none" stroke="#2b2b2b" stroke-width="1.25" stroke-linejoin="round"/><path d="M115.3,328.5 V333.3 H120.4" fill="none" stroke="#2b2b2b" stroke-width="1.25"/><path d="M185.6,328.5 H194.4 L199.5,333.3 V346.2 H185.6 Z" fill="#fff" stroke="none"/><path d="M185.6,328.5 H194.4 L199.5,333.3 V335.0 M192.0,346.2 H185.6 V328.5" fill="none" stroke="#2b2b2b" stroke-width="1.25" stroke-linejoin="round"/><path d="M194.4,328.5 V333.3 H199.5" fill="none" stroke="#2b2b2b" stroke-width="1.25"/><path d="M222.6,328.5 H231.4 L236.5,333.3 V346.2 H222.6 Z" fill="#fff" stroke="none"/><path d="M222.6,328.5 H231.4 L236.5,333.3 V335.5 M229.9,346.2 H222.6 V328.5" fill="none" stroke="#2b2b2b" stroke-width="1.25" stroke-linejoin="round"/><path d="M231.4,328.5 V333.3 H236.5" fill="none" stroke="#2b2b2b" stroke-width="1.25"/>
<circle cx="26.4" cy="342.4" r="4.85" fill="#fff" stroke="#1fa64a" stroke-width="1.3"/>
<line x1="23.2" y1="342.4" x2="29.6" y2="342.4" stroke="#1fa64a" stroke-width="1.4"/><line x1="26.4" y1="339.2" x2="26.4" y2="345.6" stroke="#1fa64a" stroke-width="1.4"/>
<path d="M115.5,346.2 H120.6 V344" fill="none" stroke="#2b2b2b" stroke-width="1.25"/>
<polyline points="80.3,335.5 84.5,339.7 88.7,335.5" fill="none" stroke="#333" stroke-width="1.5"/>
<g transform="translate(112.6,347) rotate(-43.5)"><path d="M0.3,0 L4,-1.9 H15 A1.9,1.9 0 0 1 15,1.9 H4 Z" fill="#fff" stroke="#2a8ad6" stroke-width="1.3" stroke-linejoin="round"/><line x1="13.8" y1="-1.8" x2="13.8" y2="1.8" stroke="#2a8ad6" stroke-width="1"/></g>
<circle cx="198.4" cy="342.4" r="4.85" fill="#fff" stroke="#e8383d" stroke-width="1.3"/>
<line x1="196.3" y1="340.3" x2="200.5" y2="344.5" stroke="#e8383d" stroke-width="1.4"/><line x1="200.5" y1="340.3" x2="196.3" y2="344.5" stroke="#e8383d" stroke-width="1.4"/>
<path d="M239.20,342.60 L239.10,343.47 L240.45,344.24 L239.25,346.32 L237.91,345.54 L237.20,346.06 L236.40,346.42 L236.40,347.97 L234.00,347.97 L234.00,346.42 L233.20,346.06 L232.49,345.54 L231.15,346.32 L229.95,344.24 L231.30,343.47 L231.20,342.60 L231.30,341.73 L229.95,340.96 L231.15,338.88 L232.49,339.66 L233.20,339.14 L234.00,338.78 L234.00,337.23 L236.40,337.23 L236.40,338.78 L237.20,339.14 L237.91,339.66 L239.25,338.88 L240.45,340.96 L239.10,341.73 Z" fill="#6e6e6e"/><circle cx="235.2" cy="342.6" r="2.6" fill="#fff"/>
<polyline points="313.6,336 317.6,340 321.6,336" fill="none" stroke="#333" stroke-width="1.4"/>
<g fill="none" stroke="#333" stroke-width="1.6">
<path d="M1158.2,337.7 A9.66,9.66 0 0 1 1176.5,334.7"/><polyline points="1177.4,329.1 1177.4,335 1170.7,335"/>
<path d="M1177.4,340.2 A9.66,9.66 0 0 1 1159.2,343.4"/><polyline points="1165,342.3 1158.3,342.3 1158.3,348.9"/>
</g>
<line x1="1198.5" y1="331.3" x2="1198.5" y2="345.7" stroke="#c8c8c8" stroke-width="1.2"/>
<circle cx="1221" cy="338.7" r="5.4" fill="none" stroke="#333" stroke-width="1.4"/><line x1="1224.6" y1="342.7" x2="1229.9" y2="348.5" stroke="#333" stroke-width="1.5"/>
<g stroke="#3594db" stroke-width="1.3"><line x1="1223.6" y1="329.2" x2="1235" y2="329.2"/><line x1="1226" y1="332" x2="1235" y2="332"/><line x1="1229" y1="334.8" x2="1235" y2="334.8"/></g>
</svg>
<div class="t" style="left:36.50px;top:329.58px;font-size:14.2px;color:#222;">Nowy</div>
<div class="t" style="left:129.40px;top:329.58px;font-size:14.2px;color:#222;">Edycja</div>
<div class="t" style="left:245.40px;top:329.58px;font-size:14.2px;color:#222;">Procedury</div>
<div class="a" style="left:61px;top:365px;width:1px;height:43px;background:#ededed;"></div>
<div class="a" style="left:431px;top:385px;width:1px;height:23px;background:#ededed;"></div>
<div class="a" style="left:550px;top:360px;width:1px;height:48px;background:#ededed;"></div>
<div class="a" style="left:597px;top:385px;width:1px;height:23px;background:#ededed;"></div>
<div class="a" style="left:650px;top:360px;width:1px;height:48px;background:#ededed;"></div>
<div class="a" style="left:749px;top:385px;width:1px;height:23px;background:#ededed;"></div>
<div class="a" style="left:849px;top:360px;width:1px;height:48px;background:#ededed;"></div>
<div class="a" style="left:947px;top:360px;width:1px;height:48px;background:#ededed;"></div>
<div class="a" style="left:1055px;top:360px;width:1px;height:48px;background:#ededed;"></div>
<div class="a" style="left:1116px;top:385px;width:1px;height:23px;background:#ededed;"></div>
<div class="a" style="left:1166px;top:385px;width:1px;height:23px;background:#ededed;"></div>
<div class="a" style="left:1223px;top:385px;width:1px;height:23px;background:#ededed;"></div>
<div class="a" style="left:1231px;top:360px;width:1px;height:48px;background:#ededed;"></div>
<div class="a" style="left:62px;top:384px;width:588px;height:1px;background:#ededed;"></div>
<div class="a" style="left:749px;top:384px;width:100px;height:1px;background:#ededed;"></div>
<div class="a" style="left:1055px;top:384px;width:176px;height:1px;background:#ededed;"></div>
<div class="a" style="left:10px;top:391px;width:15px;height:15px;border:1px solid #c6c6c6;background:#fff"></div>
<div class="t m" style="left:66.50px;top:362.78px;font-size:14.2px;color:#333;">Kartoteka</div>
<div class="t m" style="left:66.50px;top:387.88px;font-size:14.2px;color:#333;">Opis</div>
<div class="t" style="left:437.50px;top:388.20px;font-size:13px;color:#222;font-weight:bold;letter-spacing:-0.15px">Symbol</div>
<div class="t m" style="left:556.40px;top:362.58px;font-size:14.2px;color:#333;">Dokument</div>
<div class="t m" style="left:556.40px;top:387.88px;font-size:14.2px;color:#333;">Ilość</div>
<div class="t m" style="left:603.00px;top:387.88px;font-size:14.2px;color:#333;">JM</div>
<div class="t m" style="left:655.00px;top:362.58px;font-size:14.2px;color:#333;">Receptura</div>
<div class="t m" style="left:755.00px;top:387.88px;font-size:14.2px;color:#333;">opis</div>
<div class="t m" style="left:855.00px;top:362.58px;font-size:14.2px;color:#333;">Dokument</div>
<div class="t m" style="left:855.00px;top:387.88px;font-size:14.2px;color:#333;">Cena</div>
<div class="t m" style="left:953.00px;top:362.58px;font-size:14.2px;color:#333;">Wartość PLN</div>
<div class="t m" style="left:953.00px;top:387.88px;font-size:14.2px;color:#333;">Netto</div>
<div class="t m" style="left:1060.00px;top:362.58px;font-size:14.2px;color:#333;">Cennik</div>
<div class="t m" style="left:1060.00px;top:387.88px;font-size:14.2px;color:#333;">Cena</div>
<div class="t m" style="left:1122.00px;top:387.88px;font-size:14.2px;color:#333;">Kurs</div>
<div class="t m" style="left:1172.50px;top:387.88px;font-size:14.2px;color:#333;">Waluta</div>
<svg style="left:0;top:0" width="1250" height="420"><polyline points="1242,379 1237.5,384 1242,389" fill="none" stroke="#c4c4c4" stroke-width="1.2"/></svg>
<svg style="left:0;top:0" width="1250" height="948"><g fill="#333"><rect x="19" y="918" width="2.2" height="2.4"/><rect x="19" y="923.6" width="2.2" height="2.4"/><rect x="19" y="929.2" width="2.2" height="2.4"/></g><polyline points="55,919 50,925 55,931" fill="none" stroke="#d0d0d0" stroke-width="1.2"/><polyline points="1233.5,919 1239.5,925 1233.5,931" fill="none" stroke="#a8a8a8" stroke-width="1.2"/><polyline points="11,892.5 6,896.5 11,900.5" fill="none" stroke="#d4d4d4" stroke-width="1.1"/><polyline points="1238,892.5 1243,896.5 1238,900.5" fill="none" stroke="#d4d4d4" stroke-width="1.1"/><g stroke="#c8c8c8" stroke-width="1"><line x1="618" y1="907.5" x2="622" y2="907.5"/><line x1="623.5" y1="907.5" x2="627" y2="907.5"/><line x1="628.5" y1="907.5" x2="632" y2="907.5"/></g></svg>
<div class="t m" style="left:83.20px;top:916.78px;font-size:14.2px;color:#555;">Linijki cech</div>
<div class="t" style="left:186.50px;top:917.18px;font-size:13.05px;color:#222;font-weight:bold;letter-spacing:0">Parametry linijek</div>
<div class="a" style="left:187px;top:939.2px;width:104px;height:3.6px;background:#0288d1;"></div>
<div class="t m" style="left:326.30px;top:916.78px;font-size:14.2px;color:#555;">Linijki stanów dynamicznych</div>
<div class="t m" style="left:536.80px;top:916.78px;font-size:14.2px;color:#555;">Stany magazynowe</div>
<div class="t m" style="left:690.60px;top:916.78px;font-size:14.2px;color:#555;">Stany dynamiczne</div>
<div class="t m" style="left:839.60px;top:916.78px;font-size:14.2px;color:#555;">Linijki stanów dyn - kartoteka</div>
<div class="t m" style="left:1054.80px;top:916.78px;font-size:14.2px;color:#555;">Specyfikacja produkcyjna</div>
<div class="a" style="left:1px;top:436px;width:1247px;height:2px;background:#0a69ad;"></div>
<div class="a" style="left:1px;top:459.7px;width:1247px;height:2px;background:#0a69ad;"></div>
<div class="a" style="left:432px;top:437px;width:2px;height:23px;background:#0a69ad;"></div>
<svg style="left:0;top:0;z-index:40" width="1250" height="948">
<g fill="none" stroke="#e8141e" stroke-width="4.5" stroke-linecap="round">
<rect x="54.5" y="408.5" width="495.9" height="421.8" rx="12.5" ry="12.5"/>
<line x1="88.6" y1="460.4" x2="264.2" y2="460.4"/>
<line x1="89.2" y1="696.5" x2="272.2" y2="696.5"/>
<line x1="92.4" y1="801.4" x2="281.7" y2="801.4"/>
<line x1="89.2" y1="827.4" x2="291.7" y2="827.4"/>
</g></svg>
</div></body></html>
